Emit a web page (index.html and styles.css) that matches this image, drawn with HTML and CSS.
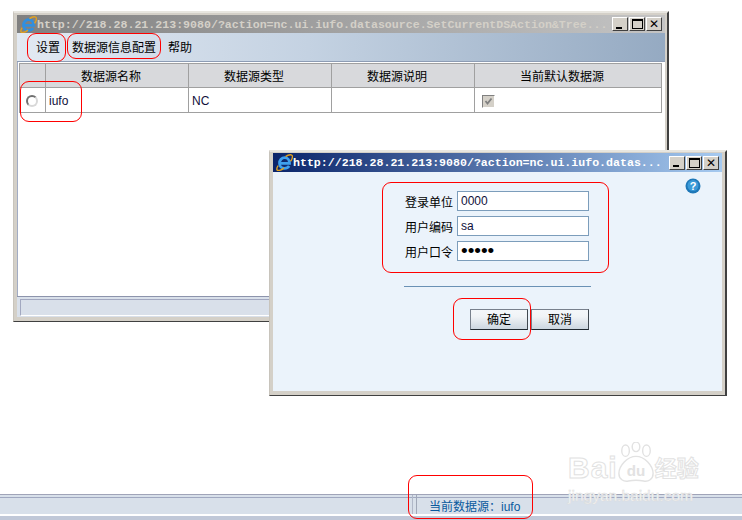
FILE: index.html
```html
<!DOCTYPE html>
<html lang="zh">
<head>
  <meta charset="UTF-8">
  <title>当前数据源</title>
  <link rel="stylesheet" href="styles.css">
</head>
<body>
  <!-- ds list window -->
  <div class="window main-window">
    <div class="titlebar titlebar-off">
      <svg class="ie-icon" viewBox="0 0 16 16"><path d="M3.500 8.800h9.200C12.700 5.400 10.700 3.400 8.200 3.400 5.400 3.400 3.300 5.800 3.300 8.800c0 2.900 2 4.800 4.700 4.800 1.900 0 3.400-.8 4.400-2.300" fill="none" stroke="#2f8fe0" stroke-width="2.600"/><path d="M2 11C0 14 .5 16 3 15.500c1.500-.3 3-1 4.500-2.200M9 2.500C12 .3 15.500 0 15.500 2.500c0 1.500-.8 3-1.800 4.500" fill="none" stroke="#e0a020" stroke-width="1.300"/></svg>
      <span class="title-text">http://218.28.21.213:9080/?action=nc.ui.iufo.datasource.SetCurrentDSAction&amp;Tree...</span>
      <div class="win-btns">
        <span class="win-btn"><i class="ico-min"></i></span>
        <span class="win-btn"><i class="ico-max"></i></span>
        <span class="win-btn ico-close">✕</span>
      </div>
    </div>
    <div class="toolbar">
      <span class="menu-item">设置</span>
      <span class="menu-item">数据源信息配置</span>
      <span class="menu-item">帮助</span>
    </div>
    <div class="window-body">
      <table class="ds-table">
        <thead>
          <tr>
            <th class="col-radio"></th>
            <th class="col-name">数据源名称</th>
            <th class="col-name">数据源类型</th>
            <th class="col-name">数据源说明</th>
            <th class="col-default">当前默认数据源</th>
          </tr>
        </thead>
        <tbody>
          <tr>
            <td class="cell-radio"><span class="radio"></span></td>
            <td>iufo</td>
            <td>NC</td>
            <td></td>
            <td><span class="check"><svg viewBox="0 0 11 11"><path d="M2.500 5l2 2.500 4-5" fill="none" stroke="#808080" stroke-width="1.800"/></svg></span></td>
          </tr>
        </tbody>
      </table>
    </div>
    <div class="status-bar"><div class="status-inner"></div></div>
  </div>

  <!-- login dialog -->
  <div class="window login-window">
    <div class="titlebar titlebar-on">
      <svg class="ie-icon" viewBox="0 0 16 16"><path d="M3.500 8.800h9.200C12.700 5.400 10.700 3.400 8.200 3.400 5.400 3.400 3.300 5.800 3.300 8.800c0 2.900 2 4.800 4.700 4.800 1.900 0 3.400-.8 4.400-2.300" fill="none" stroke="#3fa0ee" stroke-width="2.600"/><path d="M2 11C0 14 .5 16 3 15.500c1.500-.3 3-1 4.500-2.200M9 2.500C12 .3 15.500 0 15.500 2.500c0 1.500-.8 3-1.800 4.500" fill="none" stroke="#e0a020" stroke-width="1.300"/></svg>
      <span class="title-text">http://218.28.21.213:9080/?action=nc.ui.iufo.datas...</span>
      <div class="win-btns">
        <span class="win-btn"><i class="ico-min"></i></span>
        <span class="win-btn"><i class="ico-max"></i></span>
        <span class="win-btn ico-close">✕</span>
      </div>
    </div>
    <div class="login-body">
      <svg class="help-icon" viewBox="0 0 16 16">
        <circle cx="8" cy="8" r="7.500" fill="#1f78b8"/>
        <circle cx="8" cy="7.500" r="5.500" fill="#3a9ad8"/>
        <text x="8" y="12" text-anchor="middle">?</text>
      </svg>
      <div class="login-form">
        <label>登录单位</label><input type="text" value="0000">
        <label>用户编码</label><input type="text" value="sa">
        <label>用户口令</label><input type="password" value="12345">
      </div>
      <div class="login-line"></div>
      <div class="login-btns">
        <button type="button">确定</button>
        <button type="button">取消</button>
      </div>
    </div>
  </div>

  <!-- bottom bar of the page -->
  <div class="page-footer">
    <div class="footer-main">
      <span class="footer-sep"></span>
      <span class="footer-text">当前数据源<span class="footer-colon">：</span>iufo</span>
    </div>
  </div>

  <!-- red marks drawn over the screenshot -->
  <div class="mark mark-set"></div>
  <div class="mark mark-info"></div>
  <div class="mark mark-radio"></div>
  <div class="mark mark-login"></div>
  <div class="mark mark-ok"></div>
  <div class="mark mark-status"></div>

  <!-- watermark -->
  <div class="watermark">
    <div class="wm-top">
      <span class="wm-bai">Bai</span>
      <svg class="wm-paw" viewBox="0 0 40 44">
        <g fill="#fff" stroke="#e2e2e2" stroke-width="1.500">
          <ellipse cx="9" cy="9" rx="4" ry="6"/>
          <ellipse cx="20" cy="5" rx="4" ry="5"/>
          <ellipse cx="31" cy="9" rx="4" ry="6"/>
          <path d="M20 15c-9 0-18 10-18 18 0 6 5 9 10 8 5-1 11-1 16 0 5 1 10-2 10-8 0-8-9-18-18-18z"/>
        </g>
        <text x="20" y="36" text-anchor="middle">du</text>
      </svg>
      <span class="wm-cn">经验</span>
    </div>
    <div class="wm-url">jingyan.baidu.com</div>
  </div>
</body>
</html>
```

FILE: styles.css
```css
body {
  margin: 0;
  height: 520px;
  overflow: hidden;
  position: relative;
  background: white;
  font-family: "Liberation Sans", "Noto Sans CJK SC", sans-serif;
  font-size: 12px;
  color: #000;
}

/* windows */
.window {
  position: absolute;
  box-sizing: border-box;
  display: flex;
  flex-direction: column;
  background: #d4d0c8;
  border-style: solid;
  border-width: 2px 2px 1px 1px;
  border-color: #e8e6e0 #404040 #404040 #c8c4bc;
  padding: 2px 2px 4px 3px;
}

.main-window {
  left: 13px;
  top: 11px;
  width: 656px;
  height: 311px;
}

.login-window {
  left: 269px;
  top: 150px;
  width: 458px;
  height: 246px;
  padding: 1px 3px 4px 3px;
}

.titlebar {
  height: 18px;
  flex-shrink: 0;
  display: flex;
  align-items: center;
  font-family: "Liberation Mono", monospace;
  font-weight: bold;
  font-size: 11.600px;
  white-space: nowrap;
}

.titlebar-off {
  background: linear-gradient(to right, #808080, #c4c4c4);
  color: #d4d0c8;
}

.titlebar-on {
  height: 19px;
  background: linear-gradient(to right, #0a246a, #a6caf0);
  color: white;
}

.ie-icon {
  width: 17px;
  height: 17px;
  margin: 0 0 0 3px;
  flex-shrink: 0;
}

.title-text {
  flex: 1;
  overflow: hidden;
}

.win-btns {
  display: flex;
  gap: 1px;
  margin-right: 3px;
}

.win-btn {
  box-sizing: border-box;
  width: 16px;
  height: 14px;
  background: #d4d0c8;
  border: 1px solid;
  border-color: #fff #404040 #404040 #fff;
  display: flex;
  align-items: center;
  justify-content: center;
  position: relative;
  color: #000;
}

.ico-min {
  width: 6px;
  height: 2px;
  background: #000;
  margin-top: 7px;
  margin-left: -2px;
}

.ico-max {
  box-sizing: border-box;
  width: 11px;
  height: 10px;
  border: 1px solid #000;
  border-top-width: 2px;
}

.ico-close {
  font-family: "DejaVu Sans", sans-serif;
  font-size: 12px;
  font-weight: bold;
  line-height: 1;
}

/* toolbar of the list window */
.toolbar {
  height: 29px;
  flex-shrink: 0;
  box-sizing: border-box;
  display: flex;
  align-items: center;
  gap: 12px;
  padding: 0 0 2px 19px;
  background: linear-gradient(to right, #e2e9f2, #c4d2e2 45%, #95aac2);
  border-bottom: 1px solid #8d9cb4;
}

.window-body {
  flex: 1;
  background: white;
  border-left: 1px solid #a2acc4;
  padding: 1px 0 0 1px;
}

.ds-table {
  border-collapse: collapse;
  table-layout: fixed;
  width: 643px;
}

.ds-table th,
.ds-table td {
  box-sizing: border-box;
  border: 1px solid #a0a0a0;
  padding: 0 3px;
}

.ds-table th {
  height: 24px;
  padding-right: 15px;
  background: #d8d9dc;
  font-weight: normal;
  text-align: center;
}

.ds-table td {
  height: 25px;
  padding-top: 1px;
  background: white;
  color: #10103a;
}

.col-radio { width: 26px; }
.col-name { width: 143px; }

.ds-table td.cell-radio {
  padding: 0 2px 0 0;
  text-align: center;
}

.radio {
  display: inline-block;
  box-sizing: border-box;
  width: 12px;
  height: 12px;
  margin-top: 4px;
  border-radius: 50%;
  border: 2px solid;
  border-color: #707070 #d8d8d8 #d8d8d8 #707070;
  background: white;
}

.check {
  display: block;
  box-sizing: border-box;
  width: 13px;
  height: 13px;
  margin: 2px 0 0 4px;
  background: #d4d0c8;
  border: 1px solid;
  border-color: #808080 #fff #fff #808080;
}

.check svg {
  display: block;
}

.status-bar {
  height: 21px;
  flex-shrink: 0;
  box-sizing: border-box;
  background: #d9e0ea;
  border-top: 1px solid #8d94ac;
  padding: 2px 2px 1px 3px;
}

.status-inner {
  height: 100%;
  box-sizing: border-box;
  border: 1px solid;
  border-color: #a2a8c0 #d9e0ea #fff #a2a8c0;
}

/* login dialog */
.login-body {
  flex: 1;
  position: relative;
  background: #ebf3fb;
  padding-top: 19px;
}

.help-icon {
  position: absolute;
  top: 6px;
  left: 412px;
  width: 16px;
  height: 16px;
}

.help-icon text {
  fill: white;
  font-size: 11px;
  font-weight: bold;
}

.login-form {
  display: grid;
  grid-template-columns: 180px 132px;
  grid-auto-rows: 20px;
  column-gap: 4px;
  row-gap: 5px;
  align-items: center;
}

.login-form label {
  text-align: right;
}

.login-form input {
  box-sizing: border-box;
  width: 132px;
  height: 20px;
  padding: 0 3px;
  border: 1px solid #7c9dbb;
  background: white;
  font-family: "Liberation Sans", sans-serif;
  font-size: 12px;
  color: #10103a;
  outline: none;
}

.login-form input[type="password"] {
  font-size: 19px;
  color: #000;
}

.login-line {
  height: 1px;
  width: 187px;
  margin: 25px 0 0 131px;
  background: #6a91b5;
}

.login-btns {
  display: flex;
  gap: 3px;
  margin: 22px 0 0 197px;
}

.login-btns button {
  box-sizing: border-box;
  width: 58px;
  height: 21px;
  padding: 0 0 2px;
  font-family: inherit;
  font-size: 12px;
  color: #000;
  background: linear-gradient(to bottom, #f4f7fa, #f0f3f6 35%, #ccd6e0);
  border: 1px solid;
  border-color: #78808c #404850 #202830 #78808c;
}

/* page footer */
.page-footer {
  position: absolute;
  left: 0;
  right: 0;
  top: 494px;
  height: 26px;
  box-sizing: border-box;
  background: #c0c8d8;
  border-top: 1px solid #a0a4b8;
}

.footer-main {
  height: 19px;
  box-sizing: content-box;
  display: flex;
  align-items: center;
  background: #d8e0ea;
  border-bottom: 2px solid white;
  box-shadow: inset 0 2px 0 #d8e0ea, inset 0 3px 0 #a0a8c0;
  padding-left: 412px;
}

.footer-sep {
  box-sizing: border-box;
  width: 5px;
  height: 100%;
  border-left: 1px solid #b0b8c8;
  border-right: 1px solid #a0a8b8;
}

.footer-text {
  margin: 2px 0 0 12px;
  color: #0a5a9e;
}

.footer-colon {
  font-family: "Noto Sans CJK TC", sans-serif;
}

/* red marks */
.mark {
  position: absolute;
  box-sizing: border-box;
  border: 1px solid #f00;
  border-radius: 9px;
}

.mark-set { left: 27px; top: 33px; width: 39px; height: 29px; }
.mark-info { left: 67px; top: 33px; width: 94px; height: 26px; }
.mark-radio { left: 20px; top: 81px; width: 62px; height: 41px; }
.mark-login { left: 382px; top: 182px; width: 227px; height: 91px; }
.mark-ok { left: 453px; top: 298px; width: 78px; height: 42px; }
.mark-status { left: 408px; top: 475px; width: 125px; height: 44px; }

/* watermark */
.watermark {
  position: absolute;
  left: 568px;
  top: 440px;
  width: 136px;
}

.wm-top {
  display: flex;
  align-items: flex-end;
  height: 44px;
}

.wm-bai {
  font-size: 30px;
  font-weight: bold;
  line-height: 32px;
  letter-spacing: 1px;
  color: white;
  -webkit-text-stroke: 1px #e2e2e2;
}

.wm-paw {
  width: 38px;
  height: 42px;
  margin-left: -1px;
}

.wm-paw text {
  font-size: 16px;
  font-weight: bold;
  fill: #e2e2e2;
  stroke: none;
}

.wm-cn {
  font-size: 22px;
  font-weight: bold;
  line-height: 30px;
  letter-spacing: 0;
  color: white;
  -webkit-text-stroke: 1px #e2e2e2;
}

.wm-url {
  margin-top: 4px;
  font-size: 15.500px;
  line-height: 16px;
  white-space: nowrap;
  color: white;
  -webkit-text-stroke: 0.600px #dcdcdc;
}
```
